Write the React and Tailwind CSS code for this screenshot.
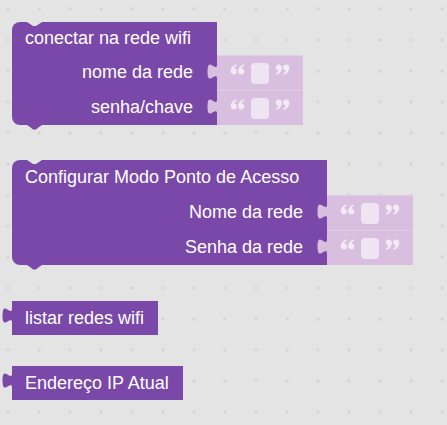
import React from "react";

const Notch = () => (
  <svg className="absolute top-0 left-[15px]" width="15" height="5" viewBox="0 0 15 5">
    <path d="M0 -1 L0 0 C2 1 4 3 6 4 L9 4 C11 3 13 1 15 0 L15 -1 Z" fill="#e4e4e4" />
  </svg>
);

const Bump = () => (
  <svg className="absolute bottom-[-5px] left-[15px]" width="15" height="5" viewBox="0 0 15 5">
    <path d="M0 0 C2 1 4 3 6 4.5 L9 4.5 C11 3 13 1 15 0 Z" fill="#7a48a8" />
  </svg>
);

const Tab = ({ fill, className }) => (
  <svg className={className} width="10" height="20" viewBox="0 0 10 20">
    <path d="M10 0 V2 C10 12 0.5 -7 0.5 9.5 S10 7 10 17 V20 Z" fill={fill} />
  </svg>
);

// bold "6" shaped quote mark
const Mark = ({ x }) => (
  <path
    transform={`translate(${x} 0)`}
    d="M5.4 0.2 C2 1.5 0 4.2 0 7.1 C0 9.1 1.4 10.5 3.2 10.5 C4.9 10.5 6.2 9.2 6.2 7.5 C6.2 5.9 5 4.7 3.4 4.6 C3.8 3.3 4.8 2.3 6.2 1.6 Z"
  />
);

const Quote = ({ flip }) => (
  <svg
    width="15"
    height="11"
    viewBox="0 0 14 11"
    className={flip ? "rotate-180" : ""}
    fill="#f3eaf5"
  >
    <Mark x={0.2} />
    <Mark x={7.6} />
  </svg>
);

const TextSlot = () => (
  <div className="relative flex h-[35px] w-[86px] items-center border-t border-[#e2cde8] bg-[#d8bfe0] pl-[13px]">
    <Tab fill="#d8bfe0" className="absolute left-[-10px] top-[6px]" />
    <div className="mb-[8px]">
      <Quote />
    </div>
    <div className="ml-[6px] h-[21px] w-[18px] rounded-[4px] bg-[#efe5f2]" />
    <div className="mb-[8px] ml-[6px]">
      <Quote flip />
    </div>
  </div>
);

const StatementBlock = ({ title, labels, width, headH }) => (
  <div className="relative flex w-fit">
    <div className={`relative flex flex-col rounded-l-[8px] bg-[#7a48a8] ${width}`}>
      <Notch />
      <div className={`flex items-center pl-[13px] ${headH}`}>{title}</div>
      {labels.map((l) => (
        <div key={l} className="flex h-[35px] items-center justify-end pr-[24px]">
          {l}
        </div>
      ))}
      <Bump />
    </div>
    <div className="flex flex-col">
      <div className={headH} />
      {labels.map((l) => (
        <TextSlot key={l} />
      ))}
    </div>
  </div>
);

const ValueBlock = ({ text }) => (
  <div className="relative flex h-[34px] w-fit items-center bg-[#7a48a8] pl-[13px] pr-[14px]">
    <Tab fill="#7a48a8" className="absolute left-[-10px] top-[5px]" />
    {text}
  </div>
);

export default function App() {
  return (
    <div className="h-[425px] w-[447px] overflow-hidden bg-[#e4e4e4] bg-[radial-gradient(circle,#d2d2d2_1px,transparent_1.6px)] bg-[length:31px_31px] bg-[position:-7.5px_-6.5px] pl-[12px] pt-[22px] font-['Liberation_Sans',Arial,sans-serif] text-[18px] text-white">
      <StatementBlock
        title="conectar na rede wifi"
        labels={["nome da rede", "senha/chave"]}
        width="w-[205px]"
        headH="h-[33px]"
      />
      <div className="mt-[35px]">
        <StatementBlock
          title="Configurar Modo Ponto de Acesso"
          labels={["Nome da rede", "Senha da rede"]}
          width="w-[315px]"
          headH="h-[35px]"
        />
      </div>
      <div className="mt-[36px]">
        <ValueBlock text="listar redes wifi" />
      </div>
      <div className="mt-[31px]">
        <ValueBlock text="Endereço IP Atual" />
      </div>
    </div>
  );
}
